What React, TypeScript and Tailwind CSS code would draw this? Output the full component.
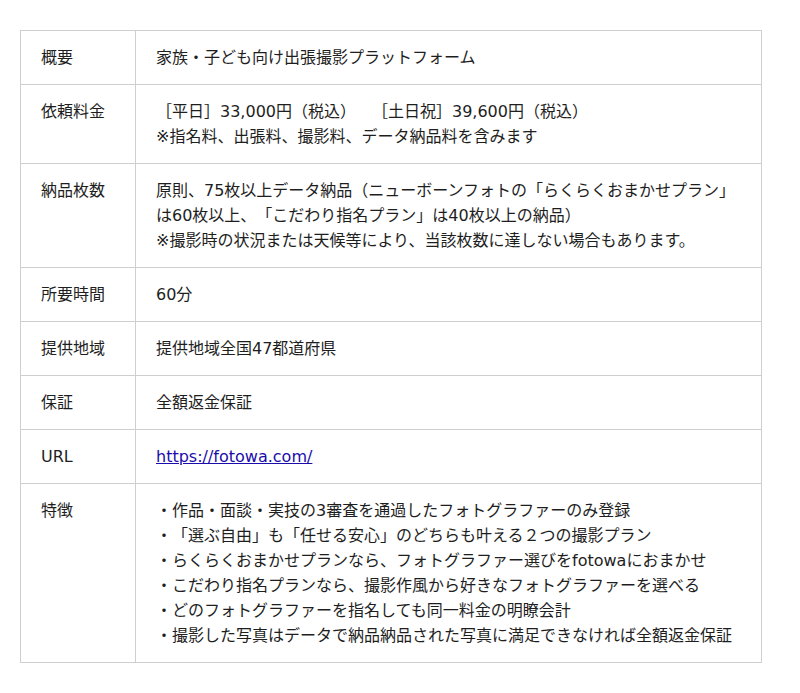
const rows: { label: string; lines: React.ReactNode[] }[] = [
  { label: '概要', lines: ['家族・子ども向け出張撮影プラットフォーム'] },
  {
    label: '依頼料金',
    lines: ['［平日］33,000円（税込）　［土日祝］39,600円（税込）', '※指名料、出張料、撮影料、データ納品料を含みます'],
  },
  {
    label: '納品枚数',
    lines: [
      '原則、75枚以上データ納品（ニューボーンフォトの「らくらくおまかせプラン」',
      'は60枚以上、「こだわり指名プラン」は40枚以上の納品）',
      '※撮影時の状況または天候等により、当該枚数に達しない場合もあります。',
    ],
  },
  { label: '所要時間', lines: ['60分'] },
  { label: '提供地域', lines: ['提供地域全国47都道府県'] },
  { label: '保証', lines: ['全額返金保証'] },
  {
    label: 'URL',
    lines: [
      <a key="u" href="https://fotowa.com/" className="text-[#1a0dab] underline">
        https://fotowa.com/
      </a>,
    ],
  },
  {
    label: '特徴',
    lines: [
      '・作品・面談・実技の3審査を通過したフォトグラファーのみ登録',
      '・「選ぶ自由」も「任せる安心」のどちらも叶える２つの撮影プラン',
      '・らくらくおまかせプランなら、フォトグラファー選びをfotowaにおまかせ',
      '・こだわり指名プランなら、撮影作風から好きなフォトグラファーを選べる',
      '・どのフォトグラファーを指名しても同一料金の明瞭会計',
      '・撮影した写真はデータで納品納品された写真に満足できなければ全額返金保証',
    ],
  },
];

export default function App() {
  return (
    <div
      className="min-h-[693px] bg-white pt-[30px] pl-[20px] text-[16px] leading-[25px] text-[#1e1e1e] [text-spacing-trim:space-all]"
      style={{ fontFamily: '"DejaVu Sans", "Noto Sans CJK JP", sans-serif' }}
    >
      <table className="w-[742px] border-collapse border border-[#dcdcdc]">
        <tbody>
          {rows.map((r) => (
            <tr key={r.label}>
              <td className="w-[115px] border border-[#cfcfcf] px-[20px] pt-[14px] pb-[14px] align-top whitespace-nowrap">
                {r.label}
              </td>
              <td className="border border-[#cfcfcf] pl-[20px] pr-[10px] pt-[14px] pb-[14px] align-top">
                {r.lines.map((l, i) => (
                  <div key={i} className="whitespace-nowrap">
                    {l}
                  </div>
                ))}
              </td>
            </tr>
          ))}
        </tbody>
      </table>
    </div>
  );
}
